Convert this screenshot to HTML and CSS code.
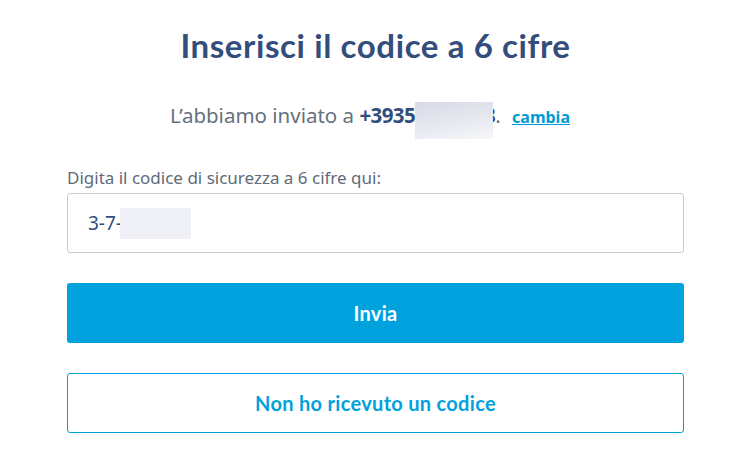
FILE: index.html
```html
<!DOCTYPE html>
<html lang="it">
<head>
<meta charset="utf-8">
<title>Inserisci il codice</title>
<link rel="stylesheet" href="styles.css">
</head>
<body>
<main class="card">
  <h1 class="title">Inserisci il codice a 6 cifre</h1>
  <p class="sent">L’abbiamo inviato a <strong class="phone">+3935<span class="redact redact-phone"></span>8</strong>. <a class="change" href="#">cambia</a></p>
  <label class="label" for="code">Digita il codice di sicurezza a 6 cifre qui:</label>
  <div class="field" id="code"><span class="value">3-7-</span><span class="redact redact-code"></span></div>
  <button class="btn btn-primary" type="button">Invia</button>
  <button class="btn btn-secondary" type="button">Non ho ricevuto un codice</button>
</main>
</body>
</html>
```
FILE: styles.css
```css
html, body {
  margin: 0;
  padding: 0;
  background: #ffffff;
}
.card {
  width: 617px;
  margin-left: 67px;
  padding-top: 25px;
  display: flex;
  flex-direction: column;
  font-family: "Noto Sans", "Open Sans", sans-serif;
}
.title {
  margin: 0;
  text-align: center;
  font-family: "Lato", sans-serif;
  font-weight: 700;
  font-size: 33px;
  letter-spacing: 0.6px;
  line-height: 40px;
  color: #334e7c;
}
.sent {
  margin: 34px 0 0;
  padding-right: 11px;
  text-align: center;
  font-size: 20.5px;
  line-height: 28px;
  color: #65717d;
}
.phone {
  font-weight: 700;
  letter-spacing: -0.6px;
  color: #334e7c;
}
.redact {
  display: inline-block;
  vertical-align: middle;
}
.redact-phone {
  width: 78px;
  height: 37px;
  margin-right: -9px;
  background: linear-gradient(170deg, #d7dbe5 0%, #e6e9f0 55%, #f6f7fa 100%);
  position: relative;
  top: 3px;
}
.change {
  margin-left: 6px;
  font-size: 16px;
  font-weight: 700;
  color: #009bd4;
  text-decoration: underline;
}
.label {
  margin-top: 31px;
  font-size: 17px;
  line-height: 22px;
  color: #5e6b78;
}
.field {
  margin-top: 4px;
  height: 58px;
  border: 1px solid #cccccc;
  border-radius: 3px;
  display: flex;
  align-items: center;
  padding-left: 20px;
  font-size: 19px;
  color: #334e7c;
}
.redact-code {
  width: 71px;
  height: 31px;
  margin-left: -2px;
  background: #eef0f5;
}
.btn {
  height: 60px;
  border-radius: 3px;
  font-family: "Lato", sans-serif;
  font-weight: 700;
  font-size: 20px;
  letter-spacing: 0.3px;
  cursor: pointer;
}
.btn-primary {
  margin-top: 30px;
  border: 0;
  background: #00a1dc;
  color: #ffffff;
}
.btn-secondary {
  margin-top: 30px;
  border: 1px solid #00a1dc;
  background: #ffffff;
  color: #00a1dc;
}
```
